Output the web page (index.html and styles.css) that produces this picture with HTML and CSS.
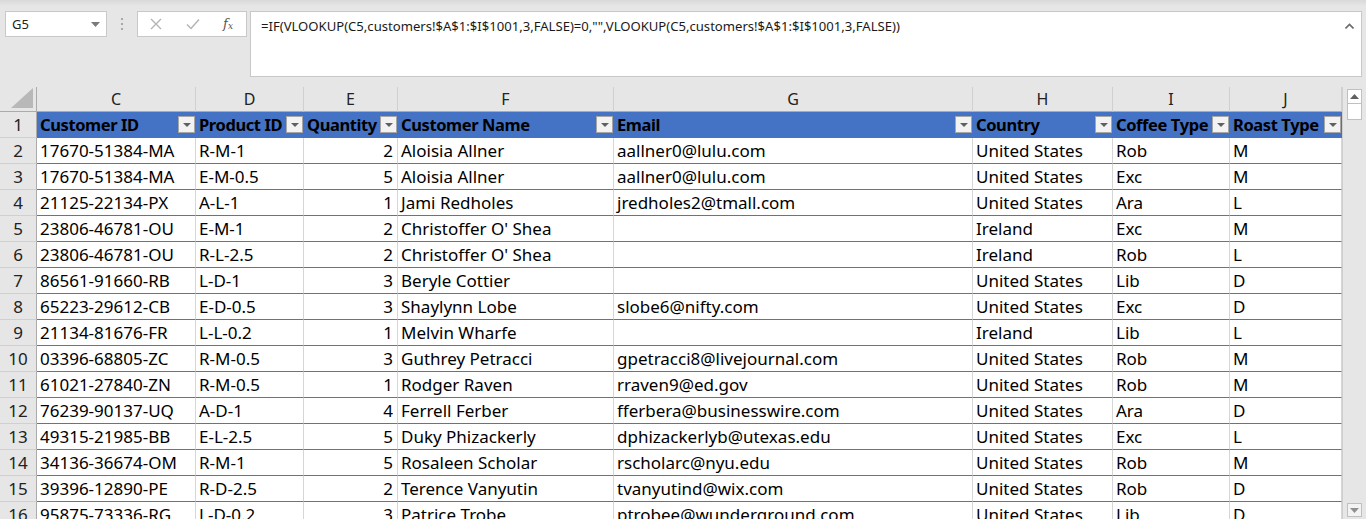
FILE: index.html
```html
<!DOCTYPE html>
<html>
<head>
<meta charset="utf-8">
<link rel="stylesheet" href="styles.css">
</head>
<body>
<div class="app">
  <div class="topbar">
    <div class="namebox"><span>G5</span><svg class="nb-caret" width="9" height="5" viewBox="0 0 9 5"><path d="M0 0h9L4.5 5z" fill="#7a7a7a"/></svg></div>
    <div class="dots"><i></i><i></i><i></i></div>
    <div class="fxgroup">
      <svg width="12" height="12" viewBox="0 0 12 12"><path d="M1 1L11 11M11 1L1 11" stroke="#b4b4b4" stroke-width="1.4" fill="none"/></svg>
      <svg width="14" height="12" viewBox="0 0 14 12"><path d="M1 6.5L5 10.5L13 1.5" stroke="#b4b4b4" stroke-width="1.5" fill="none"/></svg>
      <span class="fx">f<sub>x</sub></span>
    </div>
    <div class="formula">
      <span class="ftext">=IF(VLOOKUP(C5,customers!$A$1:$I$1001,3,FALSE)=0,"",VLOOKUP(C5,customers!$A$1:$I$1001,3,FALSE))</span>
      <svg class="collapse" width="9" height="6" viewBox="0 0 9 6"><path d="M0.5 5.5L4.5 1.5L8.5 5.5" stroke="#6a6a6a" stroke-width="1.6" fill="none"/></svg>
    </div>
  </div>
  <div class="sheet">
    <div class="grid">
      <div class="row colhead">
        <div class="corner"><svg width="22" height="20" viewBox="0 0 22 20"><path d="M22 0V20H0z" fill="#b8b8b8"/></svg></div>
        <div>C</div><div>D</div><div>E</div><div>F</div><div>G</div><div>H</div><div>I</div><div>J</div>
      </div>
      <div class="row thead">
        <div class="rh">1</div>
        <div class="th">Customer ID<b class="flt"></b></div>
        <div class="th">Product ID<b class="flt"></b></div>
        <div class="th">Quantity<b class="flt"></b></div>
        <div class="th">Customer Name<b class="flt"></b></div>
        <div class="th">Email<b class="flt"></b></div>
        <div class="th">Country<b class="flt"></b></div>
        <div class="th">Coffee Type<b class="flt"></b></div>
        <div class="th">Roast Type<b class="flt"></b></div>
      </div>
      <div class="row"><div class="rh">2</div><div>17670-51384-MA</div><div>R-M-1</div><div class="num">2</div><div>Aloisia Allner</div><div>aallner0@lulu.com</div><div>United States</div><div>Rob</div><div>M</div></div>
      <div class="row"><div class="rh">3</div><div>17670-51384-MA</div><div>E-M-0.5</div><div class="num">5</div><div>Aloisia Allner</div><div>aallner0@lulu.com</div><div>United States</div><div>Exc</div><div>M</div></div>
      <div class="row"><div class="rh">4</div><div>21125-22134-PX</div><div>A-L-1</div><div class="num">1</div><div>Jami Redholes</div><div>jredholes2@tmall.com</div><div>United States</div><div>Ara</div><div>L</div></div>
      <div class="row"><div class="rh">5</div><div>23806-46781-OU</div><div>E-M-1</div><div class="num">2</div><div>Christoffer O' Shea</div><div></div><div>Ireland</div><div>Exc</div><div>M</div></div>
      <div class="row"><div class="rh">6</div><div>23806-46781-OU</div><div>R-L-2.5</div><div class="num">2</div><div>Christoffer O' Shea</div><div></div><div>Ireland</div><div>Rob</div><div>L</div></div>
      <div class="row"><div class="rh">7</div><div>86561-91660-RB</div><div>L-D-1</div><div class="num">3</div><div>Beryle Cottier</div><div></div><div>United States</div><div>Lib</div><div>D</div></div>
      <div class="row"><div class="rh">8</div><div>65223-29612-CB</div><div>E-D-0.5</div><div class="num">3</div><div>Shaylynn Lobe</div><div>slobe6@nifty.com</div><div>United States</div><div>Exc</div><div>D</div></div>
      <div class="row"><div class="rh">9</div><div>21134-81676-FR</div><div>L-L-0.2</div><div class="num">1</div><div>Melvin Wharfe</div><div></div><div>Ireland</div><div>Lib</div><div>L</div></div>
      <div class="row"><div class="rh">10</div><div>03396-68805-ZC</div><div>R-M-0.5</div><div class="num">3</div><div>Guthrey Petracci</div><div>gpetracci8@livejournal.com</div><div>United States</div><div>Rob</div><div>M</div></div>
      <div class="row"><div class="rh">11</div><div>61021-27840-ZN</div><div>R-M-0.5</div><div class="num">1</div><div>Rodger Raven</div><div>rraven9@ed.gov</div><div>United States</div><div>Rob</div><div>M</div></div>
      <div class="row"><div class="rh">12</div><div>76239-90137-UQ</div><div>A-D-1</div><div class="num">4</div><div>Ferrell Ferber</div><div>fferbera@businesswire.com</div><div>United States</div><div>Ara</div><div>D</div></div>
      <div class="row"><div class="rh">13</div><div>49315-21985-BB</div><div>E-L-2.5</div><div class="num">5</div><div>Duky Phizackerly</div><div>dphizackerlyb@utexas.edu</div><div>United States</div><div>Exc</div><div>L</div></div>
      <div class="row"><div class="rh">14</div><div>34136-36674-OM</div><div>R-M-1</div><div class="num">5</div><div>Rosaleen Scholar</div><div>rscholarc@nyu.edu</div><div>United States</div><div>Rob</div><div>M</div></div>
      <div class="row"><div class="rh">15</div><div>39396-12890-PE</div><div>R-D-2.5</div><div class="num">2</div><div>Terence Vanyutin</div><div>tvanyutind@wix.com</div><div>United States</div><div>Rob</div><div>D</div></div>
      <div class="row"><div class="rh">16</div><div>95875-73336-RG</div><div>L-D-0.2</div><div class="num">3</div><div>Patrice Trobe</div><div>ptrobee@wunderground.com</div><div>United States</div><div>Lib</div><div>D</div></div>
    </div>
    <div class="vscroll">
      <div class="sbtn up"><svg width="9" height="5" viewBox="0 0 9 5"><path d="M0 5h9L4.5 0z" fill="#606060"/></svg></div>
      <div class="thumb"></div>
      <div class="track"></div>
      <div class="sbtn down"><svg width="9" height="5" viewBox="0 0 9 5"><path d="M0 0h9L4.5 5z" fill="#909090"/></svg></div>
    </div>
  </div>
</div>
</body>
</html>
```
FILE: styles.css
```css
* { box-sizing: border-box; }
html, body { margin: 0; padding: 0; }
body {
  width: 1366px;
  height: 519px;
  overflow: hidden;
  background: #e6e6e6;
  font-family: "Noto Sans", "Open Sans", sans-serif;
  color: #000;
}
.app { display: flex; flex-direction: column; height: 519px; }

.topbar {
  height: 87px;
  flex: none;
  display: flex;
  align-items: flex-start;
  padding: 11px 4px 0 5px;
  background: linear-gradient(#d9d9d9 0, #e6e6e6 6px, #e6e6e6 100%);
}
.namebox {
  width: 102px;
  height: 26px;
  background: #fff;
  border: 1px solid #c8c8c8;
  display: flex;
  align-items: center;
  justify-content: space-between;
  padding: 0 6px 0 6px;
  font-size: 13px;
  color: #222;
}
.dots {
  width: 30px;
  height: 26px;
  display: flex;
  flex-direction: column;
  align-items: center;
  justify-content: center;
  gap: 3px;
}
.dots i { display: block; width: 2px; height: 2px; background: #a8a8a8; }
.fxgroup {
  width: 110px;
  height: 26px;
  background: #fff;
  border: 1px solid #c8c8c8;
  display: flex;
  align-items: center;
  justify-content: space-between;
  padding: 0 13px 0 12px;
}
.fx {
  font-family: "DejaVu Serif", "Liberation Serif", serif;
  font-style: italic;
  font-size: 13px;
  color: #555;
  line-height: 1;
}
.fx sub { font-size: 9px; vertical-align: -1px; }
.formula {
  margin-left: 3px;
  flex: 1;
  height: 66px;
  background: #fff;
  border: 1px solid #c8c8c8;
  display: flex;
  align-items: flex-start;
  justify-content: space-between;
  padding: 5px 7px 0 10px;
}
.ftext {
  font-family: "Noto Sans", sans-serif;
  font-size: 13.1px;
  color: #1a1a1a;
  line-height: 18px;
  white-space: nowrap;
}
.collapse { margin-top: 6px; }

.sheet { flex: 1; display: flex; overflow: hidden; }
.grid { width: 1342px; flex: none; background: #fff; }
.row {
  display: grid;
  grid-template-columns: 37px 159px 108px 94px 216px 359px 140px 117px 112px;
  height: 26px;
}
.row > div {
  border-right: 1px solid #d6d6d6;
  border-bottom: 1px solid #4f76bd;
  font-size: 17px;
  line-height: 25px;
  padding: 0 3px;
  white-space: nowrap;
  overflow: hidden;
}
.row > .num { text-align: right; padding-right: 4px; }
.row > .rh {
  background: #e6e6e6;
  border-right: 1px solid #ababab;
  border-bottom: 1px solid #d0d0d0;
  text-align: center;
  padding: 0;
  color: #222;
  font-size: 17px;
}
.colhead { height: 25px; background: #e6e6e6; }
.colhead > div {
  border-right: 1px solid #d0d0d0;
  border-bottom: 1px solid #ababab;
  text-align: center;
  font-size: 16px;
  line-height: 24px;
  color: #222;
}
.colhead > .corner {
  border-right: 1px solid #ababab;
  display: flex;
  justify-content: flex-end;
  align-items: flex-end;
  padding: 0 3px 3px 0;
}
.colhead > .corner svg { display: block; }
.thead > .th {
  background: #4472c4;
  border-right: 1px solid #4472c4;
  border-bottom: 1px solid #4472c4;
  font-weight: 700;
  font-size: 16.5px;
  letter-spacing: -0.4px;
  display: flex;
  justify-content: space-between;
  align-items: center;
  padding: 0 0 0 3px;
}
.flt {
  flex: none;
  width: 17px;
  height: 17px;
  background: #f2f2f2;
  border: 1px solid #a6a6a6;
  position: relative;
  margin-left: 2px;
}
.flt::after {
  content: "";
  position: absolute;
  left: 4px;
  top: 6px;
  border-left: 4px solid transparent;
  border-right: 4px solid transparent;
  border-top: 4px solid #606060;
}

.vscroll {
  flex: 1;
  display: flex;
  flex-direction: column;
  align-items: center;
  padding: 2px 0 2px 0;
  background: #e6e6e6;
  border-left: 1px solid #cfcfcf;
}
.sbtn {
  width: 15px;
  height: 15px;
  background: #fff;
  border: 1px solid #c0c0c0;
  display: flex;
  align-items: center;
  justify-content: center;
}
.thumb {
  width: 15px;
  height: 16px;
  background: #fff;
  border: 1px solid #c0c0c0;
  border-top: none;
}
.track { flex: 1; }
.down { height: 14px; background: #f3f3f3; }
```
